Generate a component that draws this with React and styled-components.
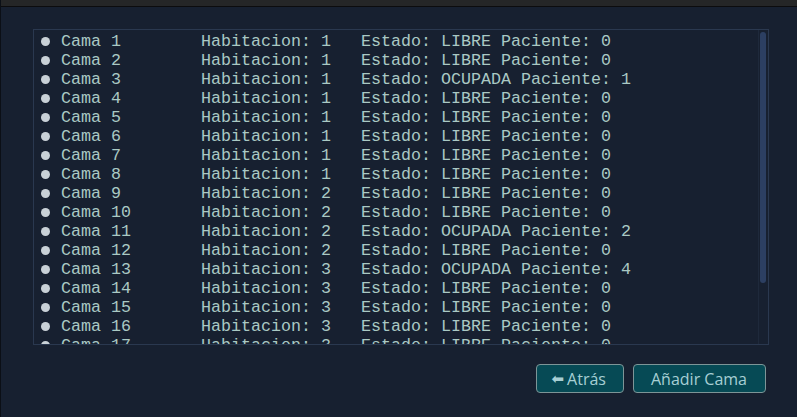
import React from "react";
import styled, { createGlobalStyle } from "styled-components";

const GlobalStyle = createGlobalStyle`
  html, body {
    margin: 0;
    padding: 0;
    background: #172030;
    height: 100%;
    overflow: hidden;
  }
  #root {
    height: 100%;
  }
`;

const Frame = styled.div`
  height: 100%;
  display: flex;
  flex-direction: column;
  background: #172030;
  border-left: 1px solid #0b0f16;
`;

const TopBar = styled.div`
  height: 6px;
  background: #252627;
  border-bottom: 1px solid #0c0c0e;
  flex-shrink: 0;
`;

const Panel = styled.div`
  flex: 1;
  display: flex;
  flex-direction: column;
  padding: 22px 27px 0 32px;
`;

const ListWrap = styled.div`
  position: relative;
  width: 736px;
  height: 316px;
  box-sizing: border-box;
  border: 1px solid #2a384f;
`;

const ListBox = styled.ul`
  margin: 0;
  padding: 2px 10px 0 0;
  list-style: none;
  height: 100%;
  box-sizing: border-box;
  overflow: hidden;
  font-family: "Liberation Mono", "DejaVu Sans Mono", monospace;
  font-size: 16.67px;
  line-height: 19px;
  color: #aac9c4;
`;

const ScrollTrack = styled.div`
  position: absolute;
  top: 0;
  right: 0;
  bottom: 0;
  width: 9px;
  border-left: 1px solid #1e293b;
`;

const ScrollThumb = styled.div`
  position: absolute;
  left: 1px;
  width: 6px;
  border-radius: 3px;
  background: #2c3f62;
`;

const Row = styled.li`
  display: flex;
  align-items: center;
  white-space: pre;
  height: 19px;
  padding-left: 7px;

  &::before {
    content: "";
    width: 9px;
    height: 9px;
    border-radius: 50%;
    background: #c9d1d7;
    margin-right: 11px;
    flex-shrink: 0;
  }
`;

const Cell = styled.span`
  width: ${p => p.$w}px;
  flex-shrink: 0;
`;

const Actions = styled.div`
  display: flex;
  justify-content: flex-end;
  gap: 9px;
  padding: 19px 4px 0 0;
`;

const Button = styled.button`
  height: 29px;
  padding: 0 ${p => p.$pr}px 0 ${p => p.$pl}px;
  background: #064a55;
  color: #a7cfd4;
  border: 1px solid #7d9597;
  border-radius: 4px;
  font-family: "Open Sans", "Noto Sans", sans-serif;
  font-size: 16px;
  line-height: 1;
  display: flex;
  align-items: center;
  gap: 3px;
  cursor: pointer;
`;

const Arrow = styled.span`
  font-family: "DejaVu Sans", sans-serif;
  font-size: 15px;
  margin-top: 1px;
`;

const rooms = [1, 1, 1, 1, 1, 1, 1, 1, 2, 2, 2, 2, 3, 3, 3, 3, 3, 4, 4, 4];
const patients = { 3: 1, 11: 2, 13: 4 };

const camas = rooms.map((hab, i) => {
  const n = i + 1;
  const paciente = patients[n] || 0;
  return { n, hab, estado: paciente ? "OCUPADA" : "LIBRE", paciente };
});

// visible part of the list -> thumb size
const boxH = 314;
const contentH = camas.length * 19 + 4;
const thumbH = Math.round((boxH * boxH) / contentH) - 6;

export default function App() {
  return (
    <>
      <GlobalStyle />
      <Frame>
        <TopBar />
        <Panel>
          <ListWrap>
            <ListBox>
              {camas.map(c => (
                <Row key={c.n}>
                  <Cell $w={140}>{`Cama ${c.n}`}</Cell>
                  <Cell $w={160}>{`Habitacion: ${c.hab}`}</Cell>
                  <span>{`Estado: ${c.estado} Paciente: ${c.paciente}`}</span>
                </Row>
              ))}
            </ListBox>
            <ScrollTrack>
              <ScrollThumb style={{ top: 2, height: thumbH }} />
            </ScrollTrack>
          </ListWrap>
          <Actions>
            <Button $pl={15} $pr={17}><Arrow>⬅</Arrow>Atrás</Button>
            <Button $pl={17} $pr={18}>Añadir Cama</Button>
          </Actions>
        </Panel>
      </Frame>
    </>
  );
}
